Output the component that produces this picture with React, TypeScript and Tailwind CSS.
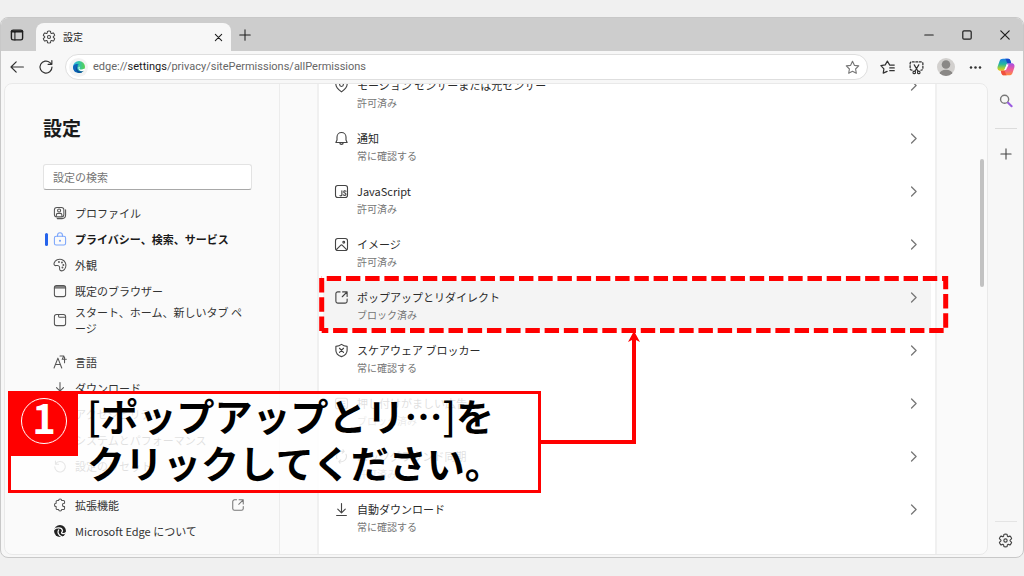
import type { ReactNode } from 'react';
import { clsx } from 'clsx';

interface IconProps {
  className?: string;
  children: ReactNode;
}

// All outline icons share a 20 unit grid
function Icon({ className, children }: IconProps) {
  return (
    <svg
      viewBox="0 0 20 20"
      fill="none"
      stroke="currentColor"
      strokeWidth="1.5"
      strokeLinecap="round"
      strokeLinejoin="round"
      aria-hidden="true"
      className={clsx('shrink-0', className ?? 'size-[15px]')}
    >
      {children}
    </svg>
  );
}

const gear = (
  <>
    <path d="M1.91 7.38A8.5 8.5 0 0 1 3.7 4.3a.5.5 0 0 1 .54-.13l1.92.68a1 1 0 0 0 1.32-.76l.36-2a.5.5 0 0 1 .4-.4 8.53 8.53 0 0 1 3.55 0c.2.04.35.2.38.4l.37 2a1 1 0 0 0 1.32.76l1.92-.68a.5.5 0 0 1 .54.13 8.5 8.5 0 0 1 1.78 3.08c.06.2 0 .4-.15.54l-1.56 1.32a1 1 0 0 0 0 1.52l1.56 1.32a.5.5 0 0 1 .15.54 8.5 8.5 0 0 1-1.78 3.08.5.5 0 0 1-.54.13l-1.92-.68a1 1 0 0 0-1.32.76l-.37 2a.5.5 0 0 1-.38.4 8.53 8.53 0 0 1-3.56 0 .5.5 0 0 1-.39-.4l-.36-2a1 1 0 0 0-1.32-.76l-1.92.68a.5.5 0 0 1-.54-.13 8.5 8.5 0 0 1-1.78-3.08.5.5 0 0 1 .15-.54l1.56-1.32a1 1 0 0 0 0-1.52L2.06 7.92a.5.5 0 0 1-.15-.54Z" />
    <circle cx="10" cy="10" r="2.2" />
  </>
);
const plus = <path d="M10 2.5v15M2.5 10h15" />;
const popup = (
  <>
    <path d="M8 2.5H5A2.5 2.5 0 0 0 2.5 5v10A2.5 2.5 0 0 0 5 17.5h10a2.5 2.5 0 0 0 2.5-2.5v-3" />
    <path d="M11.5 2.5h6v6M17 3l-6 6" />
  </>
);
const download = <path d="M10 2v12M5 9.5l5 5 5-5M3.5 18h13" />;
const puzzle = (
  <path d="M6 3.5h2a2.2 2.2 0 0 1 4.4 0H15A1.5 1.5 0 0 1 16.5 5v2.5h-.6a2.4 2.4 0 0 0 0 4.8h.6V15a1.5 1.5 0 0 1-1.5 1.5h-2.6a2.2 2.2 0 0 1-4.4 0H6A1.5 1.5 0 0 1 4.5 15v-2.7a2.4 2.4 0 0 1 0-4.8V5A1.5 1.5 0 0 1 6 3.5Z" />
);

interface NavItem {
  label: string;
  icon: ReactNode;
  active?: boolean;
  external?: boolean;
}

const NAV_GROUPS: NavItem[][] = [
  [
    {
      label: 'プロファイル',
      icon: (
        <>
          <rect x="2" y="2" width="13.5" height="13.5" rx="3.5" />
          <circle cx="8.7" cy="6.5" r="2.2" />
          <path d="M4.8 14.5v-1.8c0-1.3 1-2.2 2.2-2.2h3.5c1.3 0 2.2.9 2.2 2.2v1.8M18 5.5V13a5 5 0 0 1-5 5H6" />
        </>
      ),
    },
    {
      label: 'プライバシー、検索、サービス',
      active: true,
      icon: (
        <>
          <rect x="2" y="6" width="16" height="12.5" rx="2.5" />
          <path d="M6.5 6V4.5a3.5 3.5 0 0 1 7 0V6" />
          <circle cx="10" cy="12.5" r=".8" fill="currentColor" />
        </>
      ),
    },
    {
      label: '外観',
      icon: (
        <>
          <path d="M1.5 7.5C3 3 8 .8 12.5 2.2c5 1.7 7 7 5.5 11.3-1.5 4.3-5.5 6-7.8 4-1.6-1.5-.3-3.5-1-5.2-.9-2-2.7-1.9-4.5-1.5C2.5 11.2 1 9.7 1.5 7.5Z" />
          <circle cx="8.5" cy="5.8" r=".6" />
          <circle cx="12.8" cy="6.5" r=".6" />
          <circle cx="14.8" cy="10" r=".6" />
          <circle cx="13.5" cy="13.5" r=".6" />
        </>
      ),
    },
    {
      label: '既定のブラウザー',
      icon: (
        <>
          <rect x="2" y="2" width="16" height="16" rx="3" />
          <path d="M2 5.8h16M3 4h14" />
        </>
      ),
    },
    {
      label: 'スタート、ホーム、新しいタブ ページ',
      icon: (
        <>
          <rect x="2" y="2" width="16" height="16" rx="3" />
          <path d="M8 2v2.5A1.5 1.5 0 0 0 9.5 6H18" />
        </>
      ),
    },
  ],
  [
    {
      label: '言語',
      icon: <path d="m1.5 18.5 5.5-14 5.5 14M3.5 13.5h7M10 1.5h5.5l-2 4M13 6h6M16.5 3V11" />,
    },
    { label: 'ダウンロード', icon: download },
    {
      label: 'アクセシビリティ',
      icon: (
        <>
          <circle cx="10" cy="4" r="2" />
          <path d="M3.5 7 8 9v3l-2 6M16.5 7 12 9v3l2 6M8 9h4" />
        </>
      ),
    },
    {
      label: 'システムとパフォーマンス',
      icon: (
        <>
          <rect x="2" y="3" width="16" height="11" rx="2" />
          <path d="M7 17.5h6" />
        </>
      ),
    },
    { label: '設定のリセット', icon: <path d="M3.5 3v4.5H8M3.7 7A7.5 7.5 0 1 1 2.5 11" /> },
  ],
  [
    { label: '拡張機能', icon: puzzle, external: true },
    {
      label: 'Microsoft Edge について',
      icon: (
        <>
          <circle cx="10" cy="10" r="8.5" fill="#222" stroke="none" />
          <path
            d="M1.5 8C5 4.5 12.5 5 13.5 9c.5 2-1.3 2.3-1.3 3.5 0 1.5 4.5 1.7 6.8-.5M8 8.5c-2 3.500 0 8 4.500 9.500"
            stroke="#fafafa"
            strokeWidth="1.8"
          />
        </>
      ),
    },
  ],
];

interface Permission {
  title: string;
  status: string;
  icon: ReactNode;
  hovered?: boolean;
}

const PERMISSIONS: Permission[] = [
  {
    title: 'モーション センサーまたは光センサー',
    status: '許可済み',
    icon: (
      <>
        <path d="M10 18.5c-3.5-2.7-7.5-6-7.5-10a7.5 7.5 0 0 1 15 0c0 4-4 7.3-7.5 10Z" />
        <circle cx="10" cy="8.8" r="2.5" />
      </>
    ),
  },
  {
    title: '通知',
    status: '常に確認する',
    icon: (
      <>
        <path d="M10 2a6 6 0 0 0-6 6v4l-1.5 3.3h15L16 12V8a6 6 0 0 0-6-6Z" />
        <path d="M7.7 15.5a2.3 2.3 0 0 0 4.6 0" />
      </>
    ),
  },
  {
    title: 'JavaScript',
    status: '許可済み',
    icon: (
      <>
        <rect x="2" y="2" width="16" height="16" rx="3" />
        <path d="M10.5 9v5.5a1.5 1.5 0 0 1-2.5 1M16 9.7c-1.5-1.2-3-.5-3 .8 0 1.8 3 1.3 3 3.2 0 1.7-2.3 2-3.5.8" />
      </>
    ),
  },
  {
    title: 'イメージ',
    status: '許可済み',
    icon: (
      <>
        <rect x="2" y="2" width="16" height="16" rx="3" />
        <path d="m3.5 16.5 5.3-5.3a1.7 1.7 0 0 1 2.4 0l5.3 5.3" />
        <circle cx="13" cy="7" r="1.2" />
      </>
    ),
  },
  { title: 'ポップアップとリダイレクト', status: 'ブロック済み', icon: popup, hovered: true },
  {
    title: 'スケアウェア ブロッカー',
    status: '常に確認する',
    icon: (
      <>
        <path d="M10 1.8c2 1.6 4.3 2.5 7.5 2.7v5c0 4.3-3 7-7.5 8.7-4.5-1.7-7.5-4.4-7.5-8.7v-5C5.7 4.3 8 3.4 10 1.8Z" />
        <path d="m7.3 7 5.4 5.4M12.7 7l-5.4 5.4" />
      </>
    ),
  },
  {
    title: '押し付けがましい広告',
    status: 'ブロック済み',
    icon: (
      <>
        <rect x="2" y="3" width="16" height="14" rx="3" />
        <path d="M5.5 7h9M5.5 10h4v4h-4ZM12.5 10h2M12.5 13.5h2" />
      </>
    ),
  },
  {
    title: 'バックグラウンド同期',
    status: '許可済み',
    icon: <path d="M4 13a7 7 0 0 1 8-9.7M12 1l1.5 2.5L11 5.5M16 7a7 7 0 0 1-8 9.7M8 19l-1.5-2.5L9 14.5" />,
  },
  { title: '自動ダウンロード', status: '常に確認する', icon: download },
];

function TabStrip() {
  return (
    <header className="flex h-[33px] shrink-0 items-center bg-[#cdcdcd] pr-3 text-[#1f1f1f]">
      <button type="button" aria-label="タブ操作メニュー" className="mr-[3px] flex w-8 items-center justify-center">
        <Icon className="size-[14px]">
          <rect x="2" y="3" width="16" height="14" rx="2.5" strokeWidth="2" />
          <path d="M2.5 5h15" strokeWidth="3" />
          <path d="M7 6v11" />
        </Icon>
      </button>
      <div className="flex h-[28px] w-[195px] items-center self-end rounded-t-lg bg-[#f7f7f7] pr-2 pl-[6px]">
        <Icon className="size-[14px] text-[#444]">{gear}</Icon>
        <span className="ml-[7px] flex-1 text-[10px] leading-4">設定</span>
        <button type="button" aria-label="タブを閉じる">
          <Icon className="size-[9px]">
            <path d="m3 3 14 14M17 3 3 17" strokeWidth="2.4" />
          </Icon>
        </button>
      </div>
      <button type="button" aria-label="新しいタブ" className="ml-[7px]">
        <Icon className="size-[14px]">{plus}</Icon>
      </button>
      <div className="ml-auto flex items-center gap-[26px]">
        <button type="button" aria-label="最小化">
          <Icon className="size-3">
            <path d="M3 10h14" strokeWidth="2" />
          </Icon>
        </button>
        <button type="button" aria-label="最大化">
          <Icon className="size-3">
            <rect x="3" y="3" width="14" height="14" rx="2" strokeWidth="2" />
          </Icon>
        </button>
        <button type="button" aria-label="閉じる">
          <Icon className="size-3">
            <path d="m3 3 14 14M17 3 3 17" strokeWidth="2" />
          </Icon>
        </button>
      </div>
    </header>
  );
}

function EdgeLogo() {
  return (
    <svg viewBox="0 0 24 24" className="size-3 shrink-0" aria-hidden="true">
      <defs>
        <linearGradient id="edge-top" x1="0" y1="0" x2="1" y2="0">
          <stop offset="0" stopColor="#2ab4e8" />
          <stop offset=".55" stopColor="#35c5a0" />
          <stop offset="1" stopColor="#5ad24c" />
        </linearGradient>
      </defs>
      <circle cx="12" cy="12" r="12" fill="url(#edge-top)" />
      <path d="M0 12c1-6 8-7.5 12-4.5-5 1-6 10 1 14 2 1.2 5 1.3 7 .5C15 25 0 26 0 12Z" fill="#0f62b8" />
      <path d="M9.5 10c-3 5 0 10.5 6 10.7 2.5 0 4.5-.7 6.5-2-2 3.3-5.500 5.300-10 5.300C5 22 4 12 9.500 10Z" fill="#0b4f9c" />
      <path d="M12 11c2 1.5 1 3 .7 4 0 2.5 6 3 10.3-.2l1.5 3-5 2.5C13 21 9 15 12 11Z" fill="#fff" />
    </svg>
  );
}

function CopilotLogo() {
  return (
    <svg viewBox="0 0 24 24" className="size-[18px]" aria-hidden="true">
      <defs>
        <linearGradient id="copilot-left" x1="0" y1="0" x2="0" y2="1">
          <stop offset="0" stopColor="#1c7ee8" />
          <stop offset=".45" stopColor="#23b6a0" />
          <stop offset=".8" stopColor="#a8d236" />
          <stop offset="1" stopColor="#f2c41c" />
        </linearGradient>
        <linearGradient id="copilot-right" x1="0" y1="0" x2="0" y2="1">
          <stop offset="0" stopColor="#a44be8" />
          <stop offset=".5" stopColor="#ee5a9c" />
          <stop offset="1" stopColor="#ff8b3d" />
        </linearGradient>
      </defs>
      <path d="M15 1c1.6 0 2.4 1 2.9 2.5L19 7h-4c-1.5 0-2.2 1-2.7 2.5L10 17H4.5C1 17 0 14 1 11l2.2-6.5C4 2 5.5 1 8 1Z" fill="url(#copilot-left)" />
      <path d="M9 23c-1.6 0-2.4-1-2.9-2.5L5 17h4c1.5 0 2.2-1 2.7-2.5L14 7h5.5c3.5 0 4.5 3 3.5 6l-2.2 6.5C20 22 18.5 23 16 23Z" fill="url(#copilot-right)" />
      <path d="M11 1h4c1.6 0 2.4 1 2.9 2.5L19 7h-5c-1.5-1.5-1.7-5-3-6Z" fill="#1847c9" />
      <path d="M5 17h5c1.5 1.5 1.5 5 3 6H9c-1.6 0-2.4-1-2.9-2.5Z" fill="#f0503c" />
      <path d="M13.2 8.5h2.3L12 16H9.5Z" fill="#fff" />
    </svg>
  );
}

function Toolbar() {
  return (
    <div className="flex h-8 shrink-0 items-center bg-[#f7f7f7] px-2 text-[#333]">
      <button type="button" aria-label="戻る">
        <Icon className="size-4">
          <path d="M18 10H2.5M9 3.5 2.5 10 9 16.5" />
        </Icon>
      </button>
      <button type="button" aria-label="更新" className="ml-[13px]">
        <Icon className="size-4">
          <path d="M17.5 10A7.5 7.5 0 1 1 15 4.5L17 6.5M17.3 2v4.7h-4.7" />
        </Icon>
      </button>
      <div className="ml-[11px] flex h-[26px] flex-1 items-center rounded-full border border-[#dedede] bg-white pr-[7px] pl-[3px]">
        <span className="flex size-[19px] items-center justify-center rounded-full bg-[#f3f3f3]">
          <EdgeLogo />
        </span>
        <p className="ml-[5px] flex-1 font-[Roboto,'Noto_Sans_CJK_JP',sans-serif] text-[11px] leading-4 text-[#666]">
          edge://<span className="text-[#1a1a1a]">settings</span>/privacy/sitePermissions/allPermissions
        </p>
        <button type="button" aria-label="お気に入りに追加" className="text-[#777]">
          <Icon className="size-[15px]">
            <path d="m10 1.8 2.5 5.3 5.8.8-4.2 4.1 1 5.7L10 15l-5.1 2.7 1-5.7-4.2-4.1 5.8-.8Z" />
          </Icon>
        </button>
      </div>
      <div className="ml-3 flex items-center gap-[14px]">
        <button type="button" aria-label="お気に入り">
          <Icon>
            <path d="M13 6.8 9.8 1.5 7 6.5l-5.8 1 4 4.3-.9 5.7 5.2-2.3M14 6.8h5M13 10.5h6M13 14.2h6" strokeWidth="1.6" />
          </Icon>
        </button>
        <button type="button" aria-label="スクリーンショット">
          <Icon>
            <path d="M4 13.5h-.5A2 2 0 0 1 1.5 11.5V4.5a2 2 0 0 1 2-2h13a2 2 0 0 1 2 2v7a2 2 0 0 1-2 2H16" strokeDasharray="2.5 2.2" strokeWidth="1.7" />
            <path d="m7 6.5 5 8.5M13 6.5 8 15" strokeWidth="1.6" />
            <circle cx="7" cy="16.5" r="1.7" />
            <circle cx="13" cy="16.5" r="1.7" />
          </Icon>
        </button>
        <button type="button" aria-label="プロファイル" className="-mx-px">
          <svg viewBox="0 0 18 18" className="size-[18px]" aria-hidden="true">
            <clipPath id="avatar">
              <circle cx="9" cy="9" r="9" />
            </clipPath>
            <g clipPath="url(#avatar)">
              <rect width="18" height="18" fill="#d2d0ce" />
              <circle cx="9" cy="6.5" r="4.3" fill="#8a8886" />
              <ellipse cx="9" cy="15.5" rx="6.5" ry="3.7" fill="#8a8886" />
            </g>
          </svg>
        </button>
        <button type="button" aria-label="設定など">
          <Icon>
            <g fill="currentColor" stroke="none">
              <circle cx="4" cy="10" r="1.7" />
              <circle cx="10" cy="10" r="1.7" />
              <circle cx="16" cy="10" r="1.7" />
            </g>
          </Icon>
        </button>
        <button type="button" aria-label="Copilot">
          <CopilotLogo />
        </button>
      </div>
    </div>
  );
}

function NavLink({ item }: { item: NavItem }) {
  return (
    <a
      href="#"
      className={clsx(
        'flex min-h-[26px] items-center text-[11px] leading-4',
        item.active ? 'font-bold text-[#1a1a1a]' : 'text-[#333]',
      )}
    >
      <span className={clsx('ml-[2px] h-[13px] w-[3px] shrink-0 rounded-full', item.active && 'bg-[#2563eb]')} />
      <span className={clsx('mr-2 ml-[5px]', item.active ? 'text-[#7aa5fb]' : 'text-[#555]')}>
        <Icon className="size-[14px]">{item.icon}</Icon>
      </span>
      <span className="flex-1 break-all">{item.label}</span>
      {item.external && (
        <span className="mr-[7px] text-[#777]">
          <Icon className="size-[14px]">{popup}</Icon>
        </span>
      )}
    </a>
  );
}

function Sidebar() {
  return (
    <aside className="w-[275px] shrink-0 border-r border-[#ececec] pr-[27px] pl-[38px] text-[#1a1a1a]">
      <h1 className="mt-[30px] text-[19px] leading-7 font-bold">設定</h1>
      <input
        type="search"
        aria-label="設定の検索"
        placeholder="設定の検索"
        className="mt-[22px] mb-[10px] block h-[26px] w-full rounded-[3px] border border-[#e3e3e3] border-b-[#a8a8a8] bg-white px-[9px] text-[11px] outline-none placeholder:text-[#757575]"
      />
      <nav className="flex flex-col gap-[13px]">
        {NAV_GROUPS.map((group) => (
          <div key={group[0].label}>
            {group.map((item) => (
              <NavLink key={item.label} item={item} />
            ))}
          </div>
        ))}
      </nav>
    </aside>
  );
}

function PermissionRow({ permission }: { permission: Permission }) {
  return (
    <button
      type="button"
      className={clsx(
        'my-[2px] flex items-start rounded-[3px] px-[11px] py-[7px] text-left',
        permission.hovered && 'bg-[#f4f4f4]',
      )}
    >
      <span className="flex h-[18px] items-center text-[#444]">
        <Icon>{permission.icon}</Icon>
      </span>
      <span className="ml-2 flex flex-1 flex-col">
        <span className="text-[11px] leading-[18px] text-[#2b2b2b]">{permission.title}</span>
        <span className="text-[10px] leading-[17px] text-[#757575]">{permission.status}</span>
      </span>
      <span className="flex h-[18px] items-center text-[#777]">
        <Icon className="size-[13px]">
          <path d="m7 3 7 7-7 7" strokeWidth="2" />
        </Icon>
      </span>
    </button>
  );
}

function SideRail() {
  return (
    <div className="flex w-[35px] shrink-0 flex-col items-center pb-[7px] text-[#444]">
      <button type="button" aria-label="検索" className="mt-[11px]">
        <Icon className="size-[14px]">
          <circle cx="8" cy="7.5" r="5.8" strokeWidth="2" className="text-[#777]" />
          <path d="m13 12.5 5 5" stroke="#9a5be0" strokeWidth="3" />
        </Icon>
      </button>
      <hr className="mt-5 w-[22px] border-[#dcdcdc]" />
      <button type="button" aria-label="カスタマイズ" className="mt-[19px]">
        <Icon className="size-3">
          <path d="M10 1.5v17M1.5 10h17" strokeWidth="1.8" />
        </Icon>
      </button>
      <hr className="mt-auto w-[22px] border-[#e4e4e4]" />
      <button type="button" aria-label="サイドバーの設定" className="mt-[11px]">
        <Icon>{gear}</Icon>
      </button>
    </div>
  );
}

// Numbered instruction, its frame and the arrow between them
function Annotation() {
  return (
    <>
      <svg width="1024" height="576" fill="none" stroke="#ff0000" className="pointer-events-none absolute top-0 left-0" aria-hidden="true">
        <path d="M321.7 278.5h624v52h-624" strokeWidth="5" strokeDasharray="14.43 4.8" strokeDashoffset="-5" />
        <path d="M321.7 331v-55" strokeWidth="5" strokeDasharray="14.5 4.8" />
        <path d="M540 442h94V338" strokeWidth="4" />
        <path d="m634 331 6 11-6-3-6 3Z" fill="#ff0000" stroke="none" />
      </svg>
      <div className="absolute top-[391px] left-2 flex w-[533px] items-start bg-white/85">
        <span className="flex h-[65px] w-[70px] shrink-0 items-start justify-center bg-[#ff0000] pt-[7px] pl-[2px]">
          <span className="flex size-[46px] items-start justify-center rounded-full border border-white text-[40px] leading-9 font-bold text-white">
            1
          </span>
        </span>
        <p className="flex-1 pb-2 pl-[9px] text-[38px] leading-[47px] font-bold text-black">
          <span className="font-medium">[</span>ポップアップとリ…<span className="font-medium">]</span>を
          <br />
          クリックしてください。
        </p>
        <span className="pointer-events-none absolute inset-0 border-3 border-[#ff0000]" />
      </div>
    </>
  );
}

export default function App() {
  return (
    <div
      lang="ja"
      className="relative flex h-screen flex-col overflow-hidden bg-[#f0f0f0] pt-[17px] pb-[18px] font-['Noto_Sans_CJK_JP',sans-serif]"
    >
      <div className="flex min-h-0 flex-1 flex-col overflow-hidden rounded-lg border border-[#c8c8c8] bg-[#f7f7f7]">
        <TabStrip />
        <Toolbar />
        <div className="flex min-h-0 flex-1 pb-[2px] pl-[3px]">
          <div className="flex min-w-0 flex-1 overflow-hidden rounded-lg border border-[#e9e9e9] bg-[#fafafa]">
            <Sidebar />
            <main className="flex min-w-0 flex-1 overflow-hidden pl-[37px]">
              <div className="-mt-[17px] flex flex-1 flex-col self-start border-x-2 border-[#f0f0f0] bg-white px-1 pb-8">
                {PERMISSIONS.map((permission) => (
                  <PermissionRow key={permission.title} permission={permission} />
                ))}
              </div>
              <div className="flex w-[50px] justify-end pt-[75px] pr-[3px]">
                <div className="h-32 w-1 rounded-full bg-[#c2c2c2]" />
              </div>
            </main>
          </div>
          <SideRail />
        </div>
      </div>
      <Annotation />
    </div>
  );
}
